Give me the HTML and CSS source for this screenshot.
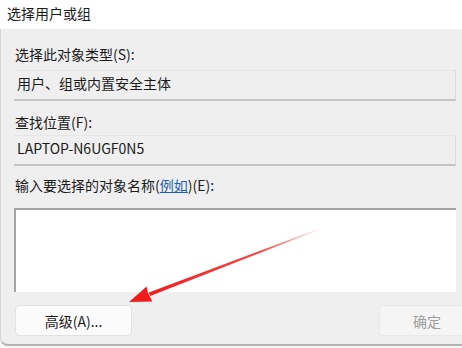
FILE: index.html
```html
<!DOCTYPE html>
<html lang="zh-CN">
<head>
  <meta charset="UTF-8">
  <title>选择用户或组</title>
  <link rel="stylesheet" href="styles.css">
</head>
<body>

  <div class="window">
    <div class="title">选择用户或组</div>
    <div class="content">
      <div class="label first">选择此对象类型(S):</div>
      <div class="field">用户、组或内置安全主体</div>

      <div class="label second">查找位置(F):</div>
      <div class="field">LAPTOP-N6UGF0N5</div>

      <div class="label third">输入要选择的对象名称(<a href="#" class="link">例如</a>)(E):</div>
      <div class="names"></div>

      <div class="actions">
        <button class="btn">高级(A)...</button>
        <button class="btn disabled">确定</button>
      </div>
    </div>
  </div>

  <!-- annotation arrow drawn over the dialog -->
  <svg class="arrow" width="462" height="348" viewBox="0 0 462 348">
    <defs>
      <linearGradient id="fade" x1="322" y1="228" x2="150" y2="294" gradientUnits="userSpaceOnUse">
        <stop offset="0" stop-color="#f21b1b" stop-opacity="0"/>
        <stop offset="0.35" stop-color="#f21b1b" stop-opacity="0.8"/>
        <stop offset="1" stop-color="#f21b1b"/>
      </linearGradient>
    </defs>
    <polygon points="322,227.6 322.3,228.5 150.1,295.9 148.9,292.4" fill="url(#fade)"/>
    <polygon points="129,302 146.6,286.6 148,293 152.4,301.6" fill="#f21b1b"/>
  </svg>

</body>
</html>
```

FILE: styles.css
```css
body {
  margin: 0;
  width: 462px;
  height: 348px;
  overflow: hidden;
  background: #f7f7f7;
  font-family: "Noto Sans CJK SC", "Noto Sans", sans-serif;
  font-size: 14px;
  color: #1b1b1b;
  position: relative;
}

.window {
  height: 346px;
}

.title {
  height: 29px;
  line-height: 27px;
  padding-left: 7px;
  background: #fff;
}

.content {
  height: 317px;
  box-sizing: border-box;
  background: #efefef;
  padding: 0 6px 0 13px;
  border-left: 1px solid #d6d6d6;
  border-bottom: 2px solid #b4b4b4;
  border-bottom-left-radius: 8px;
  display: flex;
  flex-direction: column;
}

.label {
  height: 20px;
  line-height: 20px;
  padding-left: 1px;
}

.label.first { margin-top: 15px; margin-bottom: 6px; }
.label.second { margin-top: 11px; margin-bottom: 3px; }
.label.third { margin-top: 9px; margin-bottom: 13px; }

.link {
  color: #1a5fb4;
  text-decoration: underline;
}

.field {
  height: 28px;
  line-height: 24px;
  padding-left: 3px;
  background: #efefef;
  border-top: 1px solid #e6e6e6;
  border-right: 1px solid #dcdcdc;
  border-bottom: 2px solid #c4c4c4;
}

.names {
  height: 82px;
  background: #fff;
  border-top: 2px solid #a3a3a3;
  border-left: 2px solid #a3a3a3;
}

.actions {
  display: flex;
  justify-content: space-between;
  margin-top: 13px;
  margin-right: -8px;
}

.btn {
  width: 117px;
  height: 31px;
  font-family: inherit;
  font-size: 14px;
  color: #1b1b1b;
  background: #fbfbfb;
  border: 1px solid #e2e2e2;
  border-radius: 4px;
  margin-left: 1px;
}

.btn.disabled {
  width: 85px;
  padding: 0 0 0 10px;
  color: #9d9d9d;
  background: #f5f5f5;
  border-color: #e8e8e8;
  border-right: none;
  border-radius: 4px 0 0 4px;
}

.arrow {
  position: absolute;
  left: 0;
  top: 0;
  pointer-events: none;
}
```
